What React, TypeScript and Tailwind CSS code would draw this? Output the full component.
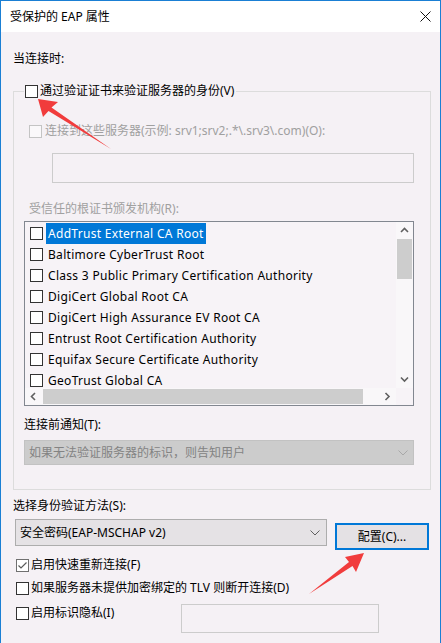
import React from "react";

const CA = [
  "AddTrust External CA Root",
  "Baltimore CyberTrust Root",
  "Class 3 Public Primary Certification Authority",
  "DigiCert Global Root CA",
  "DigiCert High Assurance EV Root CA",
  "Entrust Root Certification Authority",
  "Equifax Secure Certificate Authority",
  "GeoTrust Global CA",
];

function Box({ variant }: { variant: "normal" | "disabled" | "checked" }) {
  if (variant === "disabled")
    return <span className="block w-[13px] h-[13px] shrink-0 border border-[#c4c4c4] bg-[#faf8fa]" />;
  if (variant === "checked")
    return (
      <span className="relative block w-[13px] h-[13px] shrink-0 border border-[#707070] bg-white">
        <svg width="11" height="11" viewBox="0 0 11 11" className="absolute left-0 top-0">
          <path d="M1.5 5.5 L4 8 L9.5 2.5" fill="none" stroke="#5a5a5a" strokeWidth="1.2" />
        </svg>
      </span>
    );
  return <span className="block w-[13px] h-[13px] shrink-0 border border-[#333333] bg-white" />;
}

function Chevron({ dir, color }: { dir: "up" | "down" | "left" | "right"; color: string }) {
  const d =
    dir === "up"
      ? "M1 5 L4.5 1.5 L8 5"
      : dir === "down"
      ? "M1 1.5 L4.5 5 L8 1.5"
      : dir === "left"
      ? "M5 1 L1.5 4.5 L5 8"
      : "M1.5 1 L5 4.5 L1.5 8";
  const w = dir === "up" || dir === "down" ? 9 : 7;
  const h = dir === "up" || dir === "down" ? 7 : 9;
  return (
    <svg width={w} height={h} viewBox={`0 0 ${w} ${h}`}>
      <path d={d} fill="none" stroke={color} strokeWidth="1.6" />
    </svg>
  );
}

function ComboChevron({ color }: { color: string }) {
  return (
    <svg width="10" height="6" viewBox="0 0 10 6">
      <path d="M0.5 0.5 L5 5 L9.5 0.5" fill="none" stroke={color} strokeWidth="1" />
    </svg>
  );
}

export default function App() {
  return (
    <div className="relative w-[441px] h-[643px] overflow-hidden font-['Noto_Sans','Noto_Sans_CJK_SC',sans-serif] text-[12px] text-black">
      <div className="w-[441px] h-[643px] border-x border-t border-[#1a7fd4] bg-[#f5f1f5] flex flex-col">
        {/* Title bar */}
        <div className="h-[31px] shrink-0 bg-white flex items-center justify-between pl-[9px] pr-[9px]">
          <span className="leading-[16px]">受保护的 EAP 属性</span>
          <svg width="11" height="11" viewBox="0 0 11 11">
            <path d="M0.5 0.5 L10.5 10.5 M10.5 0.5 L0.5 10.5" stroke="#111" strokeWidth="1" />
          </svg>
        </div>

        {/* Body */}
        <div className="flex-1 pl-[12px] flex flex-col items-start">
          <div className="mt-[19px] leading-[16px]">当连接时:</div>

          {/* Group box */}
          <div className="mt-[24px] w-[418px] h-[399px] shrink-0 border border-[#dcdcdc] flex flex-col items-start">
            <div className="mt-[-9px] ml-[10px] h-[16px] flex items-center gap-[2px] bg-[#f5f1f5] pl-[1px] pr-[2px]">
              <Box variant="normal" />
              <span className="leading-[16px]">通过验证证书来验证服务器的身份(V)</span>
            </div>

            <div className="mt-[24px] ml-[15px] h-[16px] flex items-center gap-[3px] text-[#a0a0a0]">
              <Box variant="disabled" />
              <span className="leading-[16px]">连接到这些服务器(示例: srv1;srv2;.*\.srv3\.com)(O):</span>
            </div>

            <div className="mt-[14px] ml-[38px] w-[362px] h-[30px] border border-[#cccccc] bg-[#f5f1f5]" />

            <div className="mt-[18px] ml-[15px] leading-[16px] text-[#a0a0a0]">受信任的根证书颁发机构(R):</div>

            {/* List box */}
            <div className="mt-[4px] ml-[10px] w-[390px] h-[185px] border border-[#828790] bg-[#f7f3f7] grid grid-cols-[371px_17px] grid-rows-[166px_17px]">
              <div className="overflow-hidden pt-[1px]">
                {CA.map((name, i) => (
                  <div key={name} className="h-[21px] flex items-center pl-[5px] whitespace-nowrap">
                    <Box variant="normal" />
                    <span
                      className={
                        i === 0
                          ? "ml-[3px] px-[2px] h-[21px] leading-[21px] tracking-[0.3px] bg-[#0078d7] text-white"
                          : "ml-[3px] px-[2px] h-[21px] leading-[21px] tracking-[0.3px]"
                      }
                    >
                      {name}
                    </span>
                  </div>
                ))}
              </div>
              <div className="bg-[#f9f7f9] flex flex-col">
                <div className="h-[17px] flex items-center justify-center">
                  <Chevron dir="up" color="#606060" />
                </div>
                <div className="mx-[1px] h-[40px] bg-[#cdcdcd]" />
                <div className="flex-1" />
                <div className="h-[17px] flex items-center justify-center">
                  <Chevron dir="down" color="#606060" />
                </div>
              </div>
              <div className="bg-[#f9f7f9] flex items-center">
                <div className="w-[17px] h-[17px] flex items-center justify-center">
                  <Chevron dir="left" color="#606060" />
                </div>
                <div className="ml-[1px] w-[320px] h-[15px] bg-[#cdcdcd]" />
                <div className="flex-1" />
                <div className="w-[17px] h-[17px] flex items-center justify-center">
                  <Chevron dir="right" color="#606060" />
                </div>
              </div>
              <div className="bg-[#f7f3f7]" />
            </div>

            <div className="mt-[11px] ml-[10px] leading-[16px]">连接前通知(T):</div>

            <div className="mt-[7px] ml-[10px] w-[390px] h-[25px] border border-[#c2c2c2] bg-[#cccccc] flex items-center justify-between pl-[4px] pr-[5px] text-[#838383]">
              <span className="leading-[16px]">如果无法验证服务器的标识，则告知用户</span>
              <ComboChevron color="#a8a8a8" />
            </div>
          </div>

          <div className="mt-[8px] leading-[16px]">选择身份验证方法(S):</div>

          <div className="mt-[5px] flex items-start">
            <div className="ml-[2px] w-[312px] h-[27px] border border-[#adadad] bg-[#e5e2e5] flex items-center justify-between pl-[4px] pr-[6px]">
              <span className="leading-[16px]">安全密码(EAP-MSCHAP v2)</span>
              <ComboChevron color="#606060" />
            </div>
            <div className="ml-[8px] mt-[4px] w-[94px] h-[27px] border-2 border-[#0078d7] bg-[#e4e1e4] flex items-center justify-center">
              <span className="leading-[16px]">配置(C)...</span>
            </div>
          </div>

          <div className="mt-[7px] ml-[3px] h-[16px] flex items-center gap-[2px]">
            <Box variant="checked" />
            <span className="leading-[16px]">启用快速重新连接(F)</span>
          </div>

          <div className="mt-[7px] ml-[3px] h-[16px] flex items-center gap-[2px]">
            <Box variant="normal" />
            <span className="leading-[16px]">如果服务器未提供加密绑定的 TLV 则断开连接(D)</span>
          </div>

          <div className="mt-[8px] ml-[3px] flex items-start">
            <div className="mt-[1px] w-[165px] h-[16px] flex items-center gap-[2px]">
              <Box variant="normal" />
              <span className="leading-[16px]">启用标识隐私(I)</span>
            </div>
            <div className="w-[198px] h-[29px] border border-[#cccccc] bg-[#f5f1f5]" />
          </div>
        </div>
      </div>

      {/* Red annotation arrows */}
      <svg
        className="absolute left-0 top-0 pointer-events-none"
        width="441"
        height="643"
        viewBox="0 0 441 643"
      >
        <polygon
          points="38,99 58,102 51.5,107.5 111,149 48.5,111 43,117"
          fill="#f13c3c"
        />
        <polygon
          points="364,553 345,557 349,562 309,594 352.5,566 356,572"
          fill="#f13c3c"
        />
      </svg>
    </div>
  );
}
